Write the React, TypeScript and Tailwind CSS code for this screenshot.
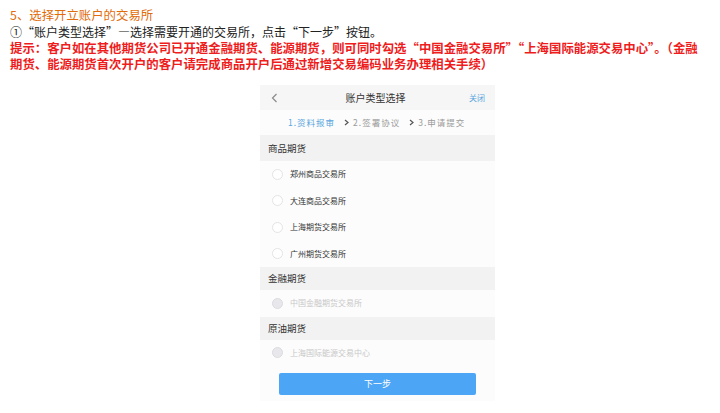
export default function App() {
  const shangpin = ["郑州商品交易所", "大连商品交易所", "上海期货交易所", "广州期货交易所"];

  return (
    <div
      lang="zh-CN"
      className="w-[720px] h-[413px] bg-white overflow-hidden font-['Noto_Sans_CJK_SC',sans-serif]"
    >
      {/* 说明文字 */}
      <div className="pt-[6px] pl-[10px] text-[12.4px]">
        <p className="text-[#e26b0a] leading-[18px]">5、选择开立账户的交易所</p>
        <p className="text-[#222] text-[12px] leading-[16px]">①“账户类型选择”—选择需要开通的交易所，点击“下一步”按钮。</p>
        <p className="text-[#ee1c1c] font-bold leading-[16px]">
          提示：客户如在其他期货公司已开通金融期货、能源期货，则可同时勾选“中国金融交易所”“上海国际能源交易中心”。（金融
          <br />
          期货、能源期货首次开户的客户请完成商品开户后通过新增交易编码业务办理相关手续）
        </p>
      </div>

      {/* 手机截图 */}
      <div className="ml-[260px] mt-[13px] w-[235px] bg-[#fcfcfc] flex flex-col">
        <div className="h-[25px] bg-[#f6f6f6] flex items-center pl-[11px] pr-[10px]">
          <svg width="7" height="10" viewBox="0 0 7 10" fill="none" stroke="#8a8a8a" strokeWidth="1.2">
            <path d="M5.5 1 L1.5 5 L5.5 9" />
          </svg>
          <span className="flex-1 text-center text-[10px] text-[#333] pl-[4px]">账户类型选择</span>
          <span className="text-[8px] text-[#5aa6e0]">关闭</span>
        </div>

        <div className="h-[25px] flex items-center pl-[28px] gap-[9px] text-[8.5px] tracking-[1px] text-[#9a9a9a]">
          <span className="text-[#5aa6e0]">1.资料报审</span>
          <span className="flex items-center gap-[4px]">
            <Chevron />
            2.签署协议
          </span>
          <span className="flex items-center gap-[4px]">
            <Chevron />
            3.申请提交
          </span>
        </div>

        <Section title="商品期货" h="h-[26px]" />
        {shangpin.map((name) => (
          <Item key={name} name={name} />
        ))}

        <Section title="金融期货" h="h-[23px]" />
        <Item name="中国金融期货交易所" disabled />

        <Section title="原油期货" h="h-[23px]" />
        <Item name="上海国际能源交易中心" disabled />

        <div className="pt-[7px] pb-[6px] px-[19px]">
          <button className="w-[197px] h-[22px] bg-[#4da5f6] rounded-[2px] text-white text-[9px] flex items-center justify-center">
            下一步
          </button>
        </div>
      </div>
    </div>
  );
}

function Chevron() {
  return (
    <svg width="5" height="7" viewBox="0 0 5 7" fill="none" stroke="#555" strokeWidth="1.2">
      <path d="M1 1 L4 3.5 L1 6" />
    </svg>
  );
}

function Section({ title, h }: { title: string; h: string }) {
  return (
    <div className={`${h} bg-[#f2f2f2] flex items-center pl-[8px] text-[9.5px] text-[#333]`}>
      {title}
    </div>
  );
}

function Item({ name, disabled }: { name: string; disabled?: boolean }) {
  return (
    <div className="h-[26.5px] flex items-center pl-[12px] gap-[7px]">
      <span
        className={
          disabled
            ? "w-[11px] h-[11px] rounded-full bg-[#e8e8ec] border border-[#dcdce0]"
            : "w-[11px] h-[11px] rounded-full border border-[#e4e4e4] bg-white"
        }
      />
      <span className={disabled ? "text-[8px] text-[#c8c8c8]" : "text-[8px] text-[#333]"}>{name}</span>
    </div>
  );
}
